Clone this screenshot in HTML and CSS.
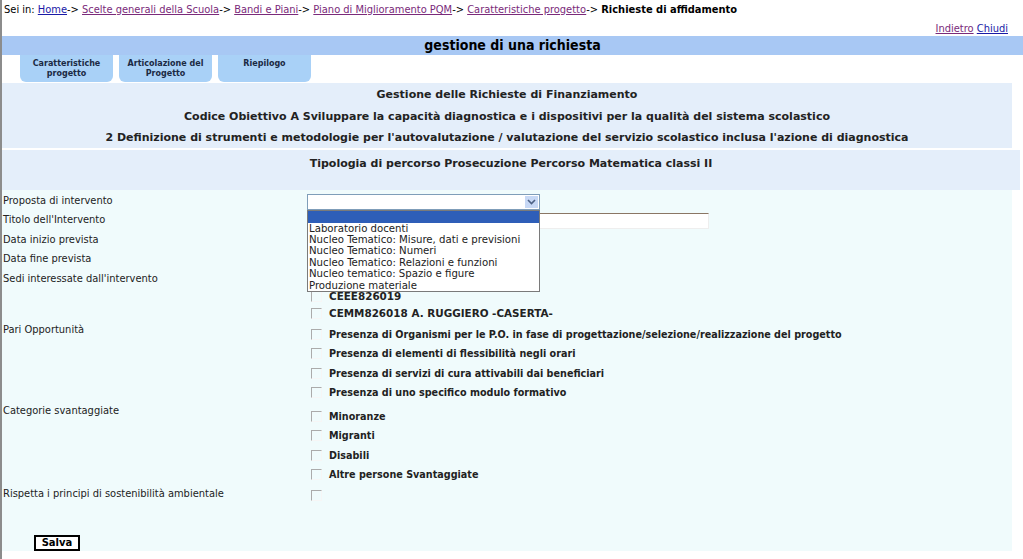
FILE: index.html
```html
<!DOCTYPE html>
<html lang="it">
<head>
    <meta charset="UTF-8">
    <title>gestione di una richiesta</title>
    <link rel="stylesheet" href="styles.css">
</head>
<body>
    <div class="crumbs">
        Sei in: <a href="#" class="lnk">Home</a>-&gt; <a href="#" class="vis">Scelte generali della Scuola</a>-&gt; <a href="#" class="vis">Bandi e Piani</a>-&gt; <a href="#" class="vis">Piano di Miglioramento PQM</a>-&gt; <a href="#" class="vis">Caratteristiche progetto</a>-&gt; <b>Richieste di affidamento</b>
    </div>
    <div class="toplinks">
        <a href="#" class="vis">Indietro</a> <a href="#" class="lnk">Chiudi</a>
    </div>

    <div class="titlebar">gestione di una richiesta</div>

    <div class="tabs">
        <a href="#" class="tab">Caratteristiche<br>progetto</a>
        <a href="#" class="tab">Articolazione del<br>Progetto</a>
        <a href="#" class="tab">Riepilogo</a>
    </div>

    <div class="headbox">
        <div>Gestione delle Richieste di Finanziamento</div>
        <div>Codice Obiettivo A Sviluppare la capacità diagnostica e i dispositivi per la qualità del sistema scolastico</div>
        <div>2 Definizione di strumenti e metodologie per l'autovalutazione / valutazione del servizio scolastico inclusa l'azione di diagnostica</div>
    </div>
    <div class="tipobox">Tipologia di percorso Prosecuzione Percorso Matematica classi II</div>

    <form class="form">
        <div class="row r-proposta">
            <div class="label">Proposta di intervento</div>
            <div class="value">
                <div class="select">
                    <span class="arrow">
                        <svg width="9" height="6" viewBox="0 0 9 6"><path d="M1 1 L4.5 4.5 L8 1" fill="none" stroke="#4d6185" stroke-width="1.6"/></svg>
                    </span>
                    <ul class="dropdown">
                        <li class="hl">&nbsp;</li>
                        <li>Laboratorio docenti</li>
                        <li>Nucleo Tematico: Misure, dati e previsioni</li>
                        <li>Nucleo Tematico: Numeri</li>
                        <li>Nucleo Tematico: Relazioni e funzioni</li>
                        <li>Nucleo tematico: Spazio e figure</li>
                        <li>Produzione materiale</li>
                    </ul>
                </div>
            </div>
        </div>
        <div class="row r-std">
            <div class="label">Titolo dell'Intervento</div>
            <div class="value"><div class="textinput"></div></div>
        </div>
        <div class="row r-std">
            <div class="label">Data inizio prevista</div>
            <div class="value"></div>
        </div>
        <div class="row r-std">
            <div class="label">Data fine prevista</div>
            <div class="value"></div>
        </div>
        <div class="row r-sedi">
            <div class="label">Sedi interessate dall'intervento</div>
            <div class="value">
                <div class="chk wide"><span class="box"></span>CEEE826019</div>
                <div class="chk wide"><span class="box"></span>CEMM826018 A. RUGGIERO -CASERTA-</div>
            </div>
        </div>
        <div class="row r-pari">
            <div class="label">Pari Opportunità</div>
            <div class="value">
                <div class="chk"><span class="box"></span>Presenza di Organismi per le P.O. in fase di progettazione/selezione/realizzazione del progetto</div>
                <div class="chk"><span class="box"></span>Presenza di elementi di flessibilità negli orari</div>
                <div class="chk"><span class="box"></span>Presenza di servizi di cura attivabili dai beneficiari</div>
                <div class="chk"><span class="box"></span>Presenza di uno specifico modulo formativo</div>
            </div>
        </div>
        <div class="row r-cat">
            <div class="label">Categorie svantaggiate</div>
            <div class="value">
                <div class="chk"><span class="box"></span>Minoranze</div>
                <div class="chk"><span class="box"></span>Migranti</div>
                <div class="chk"><span class="box"></span>Disabili</div>
                <div class="chk"><span class="box"></span>Altre persone Svantaggiate</div>
            </div>
        </div>
        <div class="row r-risp">
            <div class="label">Rispetta i principi di sostenibilità ambientale</div>
            <div class="value"><span class="box"></span></div>
        </div>
        <div class="actions">
            <button type="button" class="btn">Salva</button>
        </div>
    </form>
</body>
</html>
```

FILE: styles.css
```css
body {
    margin: 0;
    border-left: 2px solid #8c8c8c;
    min-height: 559px;
    box-sizing: border-box;
    background: #fff;
    color: #000;
    font-family: "DejaVu Sans Condensed", "DejaVu Sans", sans-serif;
    font-size: 11px;
}

a.lnk { color: #1a1aa6; }
a.vis { color: #7a2a7a; }

.crumbs {
    height: 19px;
    line-height: 19px;
    padding-left: 2px;
    white-space: nowrap;
}

.toplinks {
    height: 17px;
    line-height: 19px;
    text-align: right;
    padding-right: 15px;
}

.titlebar {
    height: 19px;
    line-height: 19px;
    background: #a8c8f4;
    text-align: center;
    font-family: "DejaVu Sans Condensed", "DejaVu Sans", sans-serif;
    font-weight: bold;
    font-size: 14px;
}

.tabs {
    display: flex;
    gap: 6px;
    height: 27px;
    padding-left: 18px;
}

.tab {
    width: 93px;
    background: #a9d1f7;
    border-radius: 0 0 6px 6px;
    text-align: center;
    color: #1b2a44;
    text-decoration: none;
    font-family: "DejaVu Sans", sans-serif;
    font-weight: bold;
    font-size: 8px;
    line-height: 10px;
    padding-top: 4px;
    box-sizing: border-box;
}

.headbox {
    margin-top: 1px;
    margin-right: 11px;
    height: 65px;
    padding-top: 1px;
    box-sizing: border-box;
    background: #e4eefa;
    text-align: center;
    font-family: "DejaVu Sans", sans-serif;
    font-weight: bold;
    font-size: 11px;
    color: #222;
}

.headbox div {
    line-height: 21.5px;
}

.tipobox {
    margin-top: 2px;
    margin-right: 3px;
    height: 40px;
    padding-top: 3px;
    box-sizing: border-box;
    background: #e4eefa;
    text-align: center;
    font-family: "DejaVu Sans", sans-serif;
    font-weight: bold;
    font-size: 11px;
    line-height: 22px;
    color: #222;
}

.form {
    margin: 0 11px 0 0;
    background: #f0fbfc;
    color: #222;
}

.row {
    display: grid;
    grid-template-columns: 305px 1fr;
}

.label {
    padding-left: 1px;
    line-height: 19px;
    white-space: nowrap;
}

.r-proposta { height: 20px; }
.r-proposta .label { line-height: 21px; }
.r-std { height: 19.5px; }
.r-std .label { line-height: 20px; }
.r-sedi { height: 53px; }
.r-sedi .value { padding-top: 19px; }
.r-sedi .chk { height: 17px; line-height: 17px; }

.r-pari { height: 81px; }
.r-pari .label { line-height: 15px; }
.r-pari .value { padding-top: 3px; }

.r-cat { height: 83px; }
.r-cat .label { line-height: 15px; }
.r-cat .value { padding-top: 4px; }

.r-risp { height: 18px; }
.r-risp .label { line-height: 16px; }
.r-risp .value { padding-top: 4px; padding-left: 4px; }

.value {
    position: relative;
}

.select {
    position: relative;
    width: 233px;
    height: 16px;
    margin-top: 4px;
    background: #fff;
    border: 1px solid #7f9db9;
    box-sizing: border-box;
}

.arrow {
    position: absolute;
    right: 1px;
    top: 1px;
    width: 13px;
    height: 12px;
    background: #c7d8f5;
    display: flex;
    align-items: center;
    justify-content: center;
}

.dropdown {
    position: absolute;
    z-index: 2;
    left: -1px;
    top: 15px;
    width: 233px;
    margin: 0;
    padding: 0;
    list-style: none;
    background: #fff;
    border: 1px solid #7a7a7a;
    box-sizing: border-box;
    font-size: 11.3px;
    line-height: 11.4px;
    color: #222;
}

.dropdown li {
    padding-left: 1px;
    white-space: nowrap;
}

.dropdown .hl {
    background: #2e5eb8;
    height: 11.5px;
}

.textinput {
    width: 402px;
    height: 16px;
    margin-top: 3px;
    background: #fff;
    border-top: 1px solid #8a7664;
    border-left: 1px solid #cfcfcf;
    border-right: 1px solid #eee;
    border-bottom: 1px solid #eee;
    box-sizing: border-box;
}

.chk {
    height: 19.5px;
    line-height: 19.5px;
    padding-left: 4px;
    font-weight: bold;
    font-size: 10.7px;
    white-space: nowrap;
    display: flex;
    align-items: center;
}

.chk.wide {
    font-family: "DejaVu Sans", sans-serif;
    font-size: 10.4px;
}

.box {
    display: inline-block;
    width: 11px;
    height: 11px;
    margin-right: 7px;
    border-top: 1px solid #ababab;
    border-left: 1px solid #ababab;
    border-right: 1px solid #f6f6f6;
    border-bottom: 1px solid #f6f6f6;
    box-sizing: border-box;
}

.actions {
    height: 47px;
    padding: 31px 0 0 32px;
    box-sizing: border-box;
}

.btn {
    display: block;
    width: 46px;
    height: 16px;
    padding: 0;
    background: #fff;
    border: 2px solid #000;
    font-family: "DejaVu Sans", sans-serif;
    font-weight: bold;
    font-size: 10px;
    line-height: 12px;
    color: #000;
}
```
